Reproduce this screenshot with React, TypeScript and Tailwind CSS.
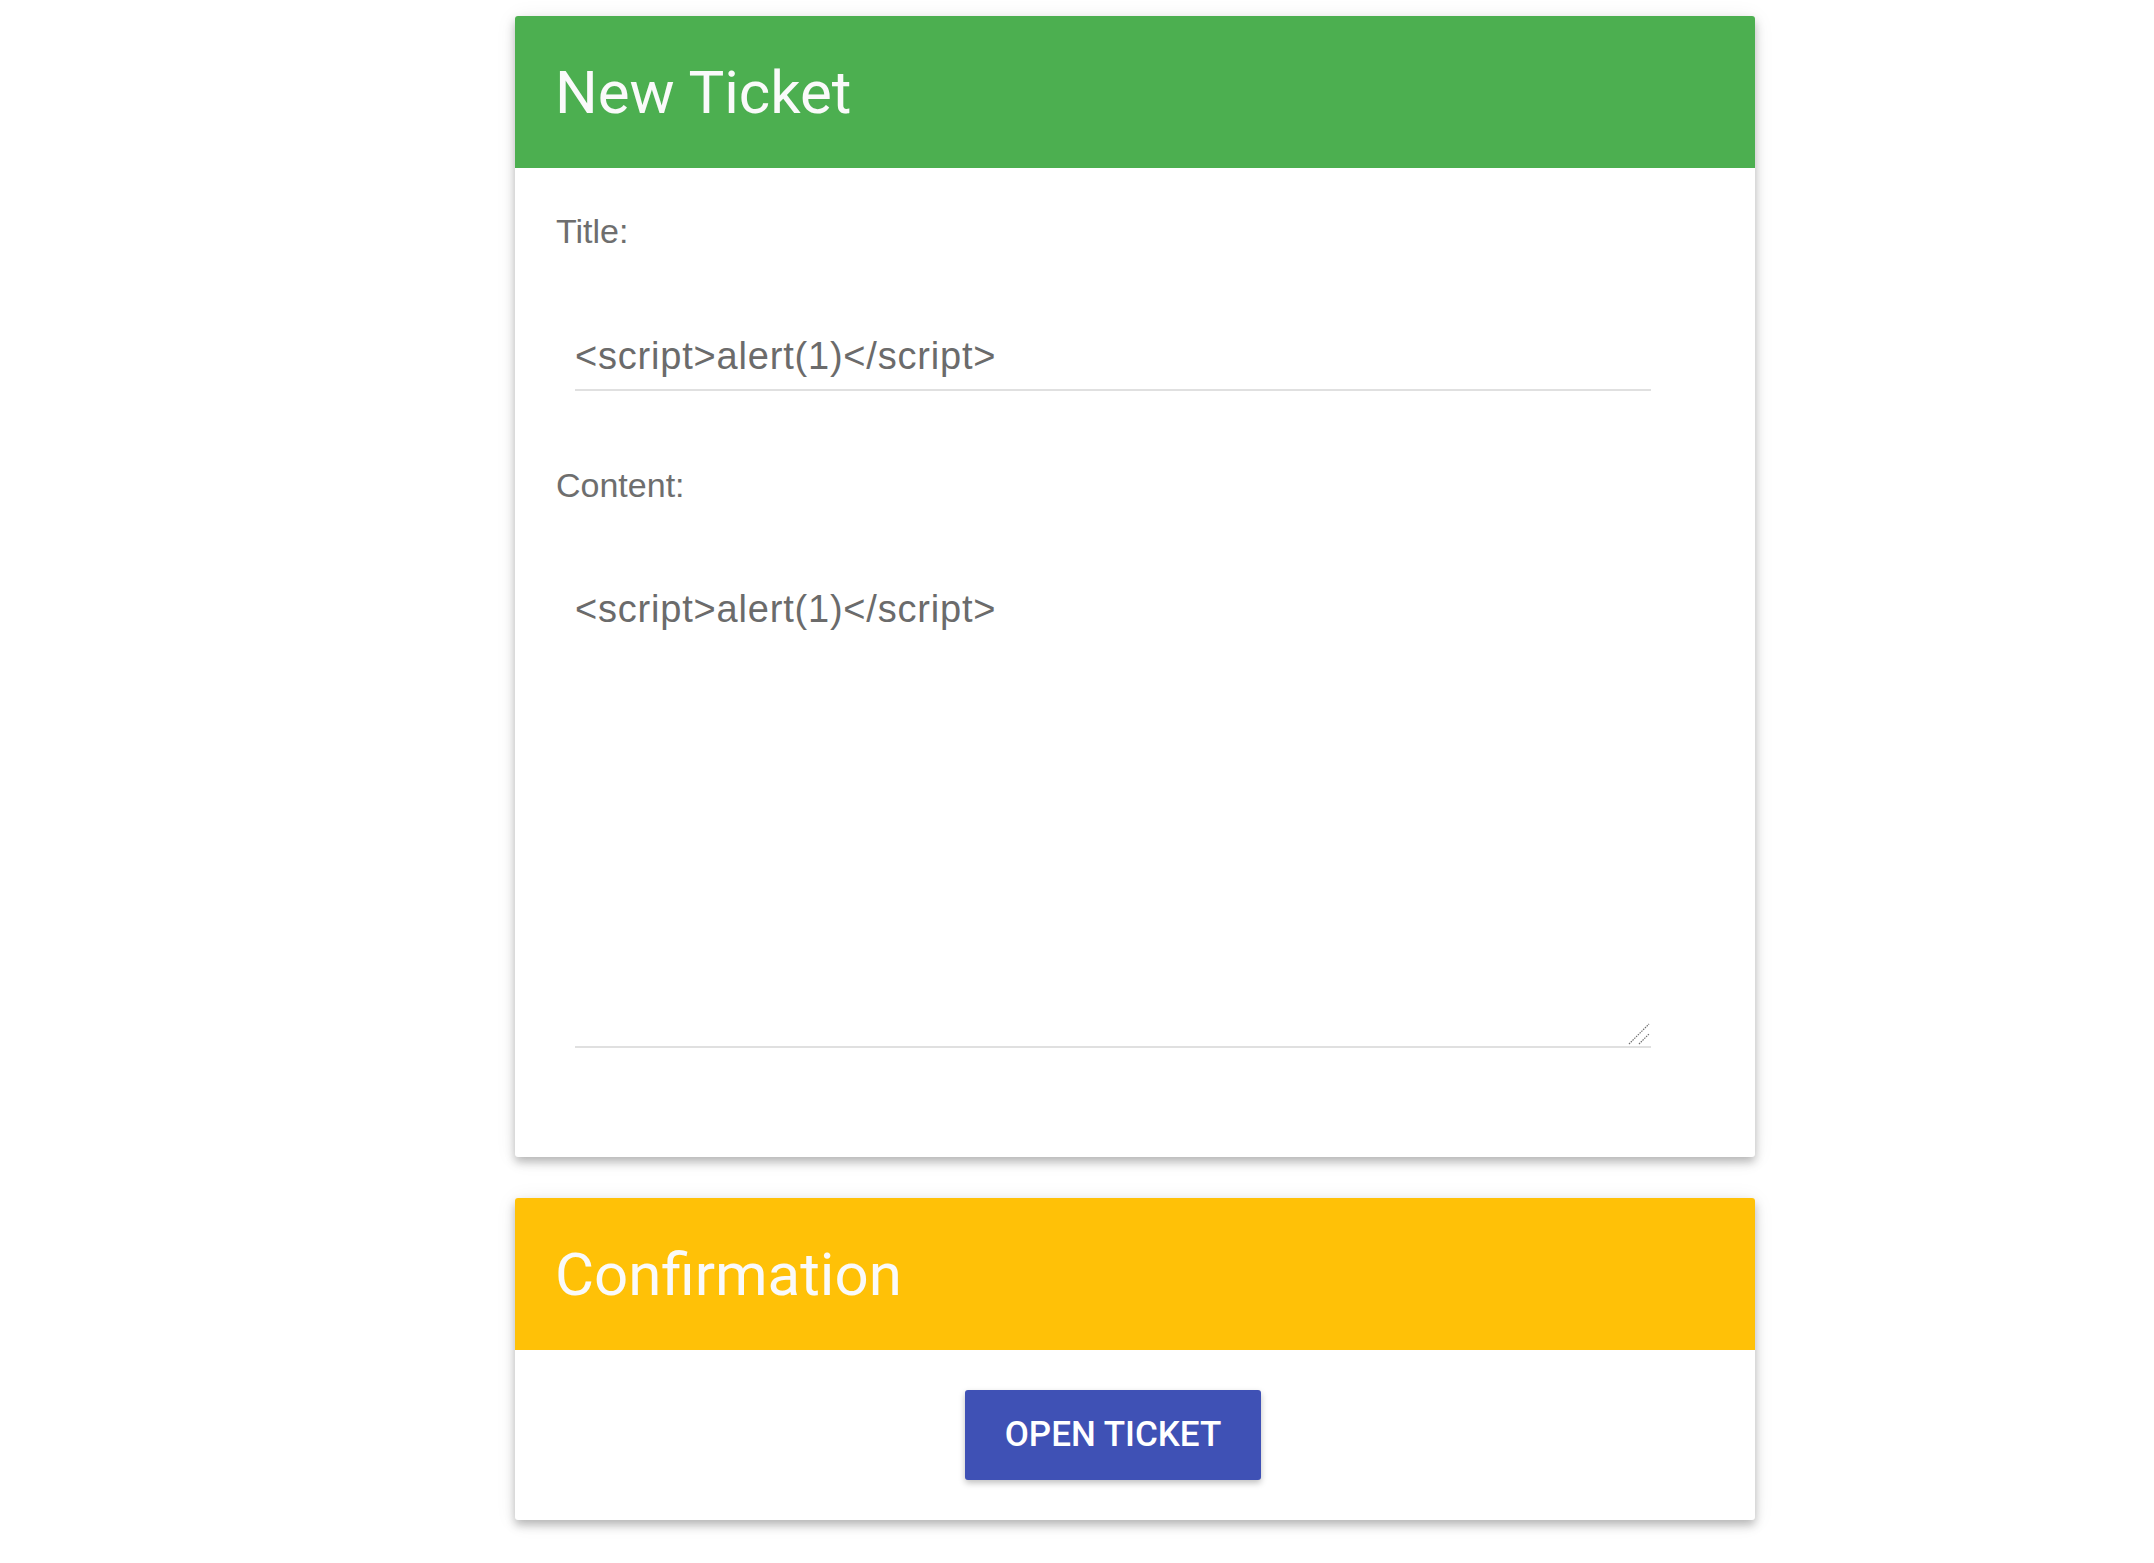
import { useState } from "react";

const PAYLOAD = "<script>alert(1)</script>";

function CardHeader({ title, color }: { title: string; color: string }) {
  return (
    <div className={`flex h-[152px] items-center px-[40px] ${color}`}>
      <h1 className="font-['Roboto',sans-serif] text-[60px] font-normal leading-[normal] text-[#fafafa]">
        {title}
      </h1>
    </div>
  );
}

export default function App() {
  const [title, setTitle] = useState(PAYLOAD);
  const [content, setContent] = useState(PAYLOAD);

  return (
    <div className="min-h-screen bg-white pt-[16px] pb-[40px]">
      <div className="ml-[515px] flex w-[1240px] flex-col gap-[41px]">
        {/* new ticket form */}
        <div className="overflow-hidden rounded-[3px] bg-white shadow-[0_5px_10px_rgba(0,0,0,0.26),0_2px_22px_rgba(0,0,0,0.07)]">
          <CardHeader title="New Ticket" color="bg-[#4caf50]" />
          <div className="pt-[44px] pb-[109px] font-['Liberation_Sans',Arial,sans-serif]">
            <label className="block pl-[41px] text-[34px] leading-[normal] text-[#6e6e6e]">Title:</label>
            <input
              value={title}
              onChange={(e) => setTitle(e.target.value)}
              className="mt-[72px] ml-[60px] box-border block h-[68px] w-[1076px] border-b-2 border-[#e0e0e0] bg-transparent p-0 text-[38px] leading-[normal] tracking-[0.8px] text-[#6b6b6b] outline-none"
            />

            <label className="mt-[75px] block pl-[41px] text-[34px] leading-[normal] text-[#6e6e6e]">Content:</label>
            <div className="relative mt-[72px] ml-[60px] w-[1076px]">
              <textarea
                value={content}
                onChange={(e) => setContent(e.target.value)}
                className="box-border block h-[471px] w-full resize-none border-b-2 border-[#e0e0e0] bg-transparent px-0 pt-[11px] text-[38px] leading-[normal] tracking-[0.8px] text-[#6b6b6b] outline-none"
              />
              {/* resize grip */}
              <svg
                className="pointer-events-none absolute right-[1px] bottom-[3px]"
                width="22"
                height="22"
                viewBox="0 0 22 22"
              >
                <path d="M1 21 L21 1 M11 21 L21 11" stroke="#707070" strokeWidth="1.2" strokeDasharray="1.5 1" fill="none" />
              </svg>
            </div>
          </div>
        </div>

        {/* confirmation */}
        <div className="overflow-hidden rounded-[3px] bg-white shadow-[0_5px_10px_rgba(0,0,0,0.26),0_2px_22px_rgba(0,0,0,0.07)]">
          <CardHeader title="Confirmation" color="bg-[#ffc107]" />
          <div className="ml-[60px] flex w-[1076px] justify-center py-[40px]">
            <button
              type="button"
              className="h-[90px] w-[296px] rounded-[3px] bg-[#3f51b5] font-['Roboto',sans-serif] text-[35px] font-medium uppercase text-white shadow-[0_3px_6px_rgba(0,0,0,0.25)]"
            >
              Open Ticket
            </button>
          </div>
        </div>
      </div>
    </div>
  );
}
